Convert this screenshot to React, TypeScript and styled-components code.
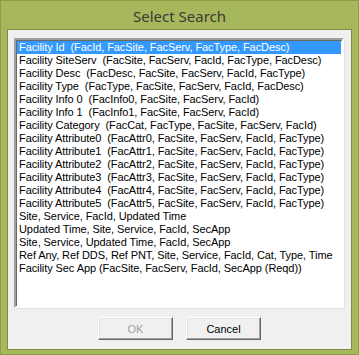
import styled, { createGlobalStyle } from 'styled-components';

const items = [
  'Facility Id  (FacId, FacSite, FacServ, FacType, FacDesc)',
  'Facility SiteServ  (FacSite, FacServ, FacId, FacType, FacDesc)',
  'Facility Desc  (FacDesc, FacSite, FacServ, FacId, FacType)',
  'Facility Type  (FacType, FacSite, FacServ, FacId, FacDesc)',
  'Facility Info 0  (FacInfo0, FacSite, FacServ, FacId)',
  'Facility Info 1  (FacInfo1, FacSite, FacServ, FacId)',
  'Facility Category  (FacCat, FacType, FacSite, FacServ, FacId)',
  'Facility Attribute0  (FacAttr0, FacSite, FacServ, FacId, FacType)',
  'Facility Attribute1  (FacAttr1, FacSite, FacServ, FacId, FacType)',
  'Facility Attribute2  (FacAttr2, FacSite, FacServ, FacId, FacType)',
  'Facility Attribute3  (FacAttr3, FacSite, FacServ, FacId, FacType)',
  'Facility Attribute4  (FacAttr4, FacSite, FacServ, FacId, FacType)',
  'Facility Attribute5  (FacAttr5, FacSite, FacServ, FacId, FacType)',
  'Site, Service, FacId, Updated Time',
  'Updated Time, Site, Service, FacId, SecApp',
  'Site, Service, Updated Time, FacId, SecApp',
  'Ref Any, Ref DDS, Ref PNT, Site, Service, FacId, Cat, Type, Time',
  'Facility Sec App (FacSite, FacServ, FacId, SecApp (Reqd))',
];

const GlobalStyle = createGlobalStyle`
  html, body {
    margin: 0;
    padding: 0;
    background: #a7b75b;
  }
`;

const Window = styled.div`
  box-sizing: border-box;
  width: 359px;
  height: 355px;
  display: flex;
  flex-direction: column;
  background: #a7b75b;
  border: 1px solid #8d9c48;
  padding: 0 6px 4px 6px;
`;

const TitleBar = styled.div`
  height: 28px;
  display: flex;
  align-items: center;
  justify-content: center;
  font-family: 'Noto Sans', 'Open Sans', sans-serif;
  font-size: 15px;
  color: #3a3a3a;
  padding-top: 1px;
  box-sizing: border-box;
`;

const Client = styled.div`
  flex: 1;
  display: flex;
  flex-direction: column;
  background: #f0f0f0;
  border: 1px solid #7f8c44;
  padding: 8px 7px 9px 6px;
`;

const ListBox = styled.div`
  height: 270px;
  box-sizing: border-box;
  background: #fff;
  border-style: solid;
  border-width: 2px;
  border-color: #a0a0a0 #fff #fff #a0a0a0;
  box-shadow: inset 1px 1px 0 #696969, 1px 1px 0 #e3e3e3;
  padding: 1px 1px 0 1px;
  overflow: hidden;
`;

const Item = styled.div<{ $selected?: boolean }>`
  height: 13px;
  line-height: 13px;
  padding-left: 2px;
  font-family: 'Liberation Sans', Arial, sans-serif;
  font-size: 11px;
  letter-spacing: -0.08px;
  white-space: pre;
  color: ${(p) => (p.$selected ? '#fff' : '#000')};
  background: ${(p) => (p.$selected ? '#3399ff' : 'transparent')};
`;

const ButtonRow = styled.div`
  display: flex;
  justify-content: center;
  gap: 13px;
  margin-top: 9px;
  padding-left: 1px;
`;

const Button = styled.button`
  width: 75px;
  height: 23px;
  box-sizing: border-box;
  background: #f0f0f0;
  border-style: solid;
  border-width: 1px;
  border-color: #fff #696969 #696969 #fff;
  box-shadow: inset -1px -1px 0 #a0a0a0, inset 1px 1px 0 #e3e3e3;
  font-family: 'Liberation Sans', Arial, sans-serif;
  font-size: 11px;
  font-weight: normal;
  color: #000;
  padding: 0;

  &:disabled {
    color: #a0a0a0;
  }
`;

const App = (): React.ReactElement => (
  <>
    <GlobalStyle />
    <Window>
      <TitleBar>Select Search</TitleBar>
      <Client>
        <ListBox>
          {items.map((text, i) => (
            <Item key={i.toString()} $selected={i === 0}>
              {text}
            </Item>
          ))}
        </ListBox>
        <ButtonRow>
          <Button disabled>OK</Button>
          <Button>Cancel</Button>
        </ButtonRow>
      </Client>
    </Window>
  </>
);

export default App;
